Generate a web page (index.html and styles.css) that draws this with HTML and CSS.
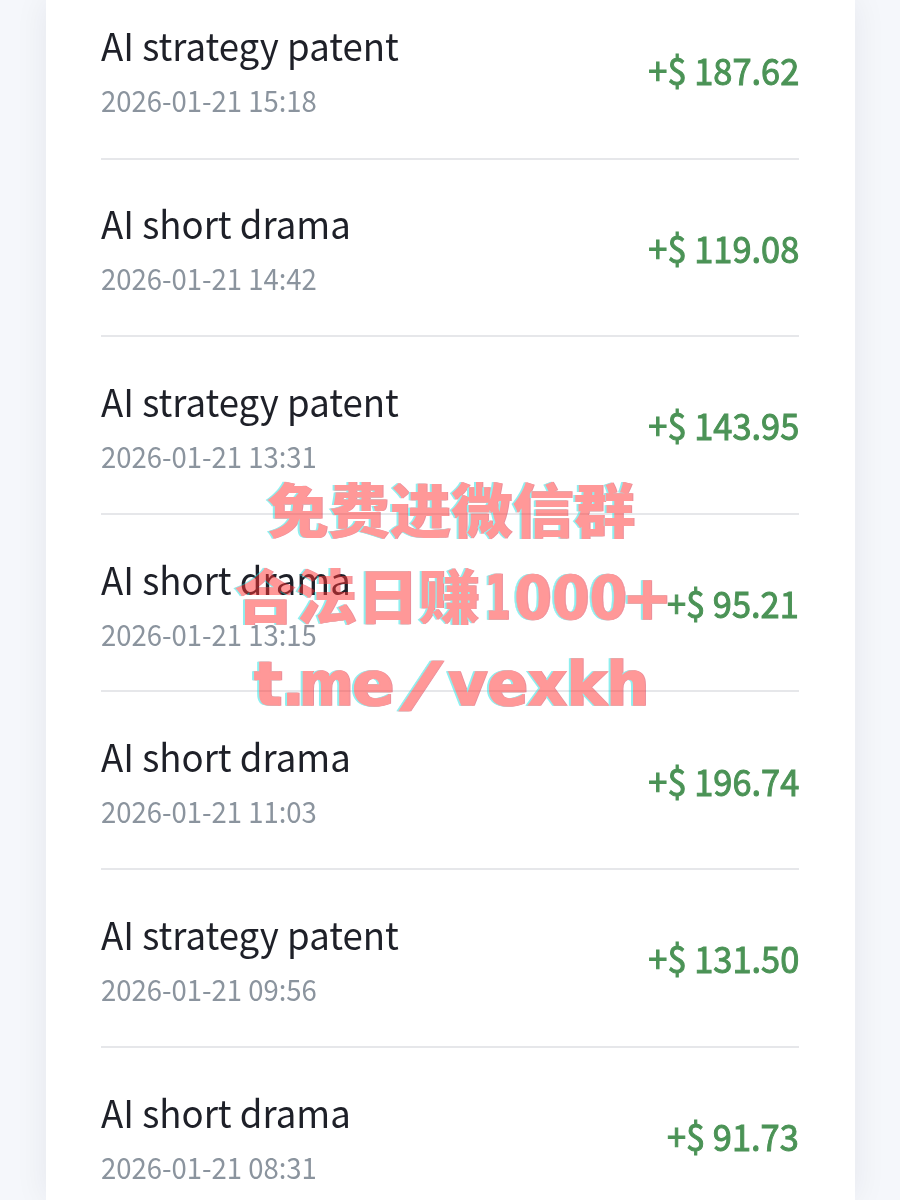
FILE: index.html
```html
<!DOCTYPE html>
<html lang="en">

<head>
  <meta charset="UTF-8">
  <meta name="viewport" content="width=device-width, initial-scale=1.0">
  <title>Earnings</title>
  <link rel="stylesheet" href="styles.css">
</head>

<body>
  <div class="card">
    <div class="row">
      <div class="info">
        <div class="name">AI strategy patent</div>
        <div class="time">2026-01-21 15:18</div>
      </div>
      <div class="amount">+$ 187.62</div>
    </div>
    <div class="row">
      <div class="info">
        <div class="name">AI short drama</div>
        <div class="time">2026-01-21 14:42</div>
      </div>
      <div class="amount">+$ 119.08</div>
    </div>
    <div class="row">
      <div class="info">
        <div class="name">AI strategy patent</div>
        <div class="time">2026-01-21 13:31</div>
      </div>
      <div class="amount">+$ 143.95</div>
    </div>
    <div class="row">
      <div class="info">
        <div class="name">AI short drama</div>
        <div class="time">2026-01-21 13:15</div>
      </div>
      <div class="amount">+$ 95.21</div>
    </div>
    <div class="row">
      <div class="info">
        <div class="name">AI short drama</div>
        <div class="time">2026-01-21 11:03</div>
      </div>
      <div class="amount">+$ 196.74</div>
    </div>
    <div class="row">
      <div class="info">
        <div class="name">AI strategy patent</div>
        <div class="time">2026-01-21 09:56</div>
      </div>
      <div class="amount">+$ 131.50</div>
    </div>
    <div class="row">
      <div class="info">
        <div class="name">AI short drama</div>
        <div class="time">2026-01-21 08:31</div>
      </div>
      <div class="amount">+$ 91.73</div>
    </div>
  </div>

  <!-- watermark -->
  <svg class="mark" width="490" height="300" viewBox="205 450 490 300" lang="zh-CN">
    <text x="267" y="533" textLength="368" lengthAdjust="spacingAndGlyphs">免费进微信群</text>
    <text x="234" y="618.5" textLength="246" lengthAdjust="spacingAndGlyphs">合法日赚</text>
    <text class="latin" y="618.5"><tspan x="485" textLength="25" lengthAdjust="spacingAndGlyphs">1</tspan><tspan class="zero" x="514" textLength="113" lengthAdjust="spacingAndGlyphs">000</tspan><tspan x="622" textLength="50" lengthAdjust="spacingAndGlyphs">+</tspan></text>
    <text class="latin" y="704.5"><tspan x="254" textLength="50" lengthAdjust="spacingAndGlyphs">t.</tspan><tspan x="299" textLength="54" lengthAdjust="spacingAndGlyphs">m</tspan><tspan x="352" textLength="42" lengthAdjust="spacingAndGlyphs">e</tspan><tspan class="slash" x="399" textLength="44" lengthAdjust="spacingAndGlyphs">/</tspan><tspan x="448" textLength="201" lengthAdjust="spacingAndGlyphs">vexkh</tspan></text>
  </svg>
</body>

</html>
```

FILE: styles.css
```css
* {
  margin: 0;
  padding: 0;
  box-sizing: border-box;
}

body {
  height: 1200px;
  overflow: hidden;
  background-color: #f5f7fb;
  font-family: "Noto Sans CJK SC", sans-serif;
}

.card {
  width: 809px;
  height: 1200px;
  margin-left: 45.5px;
  padding: 0 55.5px;
  background-color: #fff;
  box-shadow: 0 0 32px rgba(30, 35, 60, 0.07);
}

.row {
  display: flex;
  justify-content: space-between;
  align-items: center;
  height: 177.65px;
  border-bottom: 2px solid #e6e7ea;
}

.row:first-child {
  height: 159.5px;
  padding-bottom: 19px;
}

.name {
  height: 58px;
  line-height: 58px;
  font-size: 38.5px;
  color: #1e2028;
  transform: scaleX(0.95);
  transform-origin: left;
}

.time {
  height: 50px;
  line-height: 52px;
  font-size: 29px;
  color: #8b949e;
  transform: scaleX(0.947);
  transform-origin: left;
}

.amount {
  margin-bottom: 1px;
  font-size: 37px;
  color: #4b9356;
  -webkit-text-stroke: 1px #4b9356;
  transform: scaleX(0.93);
  transform-origin: right;
}

.mark {
  position: absolute;
  left: 205px;
  top: 450px;
  opacity: 0.5;
  filter: drop-shadow(-1.5px 0 0 #20e0e0) drop-shadow(1px 0 0 #d8203a);
}

.mark text {
  font-family: "Noto Sans CJK SC", sans-serif;
  font-size: 59px;
  font-weight: 900;
  fill: #ff3333;
}

.mark .latin {
  font-family: "DejaVu Sans", sans-serif;
  font-size: 61px;
  stroke: #ff3333;
  stroke-width: 1.4px;
}

.mark .zero {
  stroke-width: 0.5px;
}

.mark .slash {
  font-weight: 400;
  stroke-width: 0.5px;
}
```
